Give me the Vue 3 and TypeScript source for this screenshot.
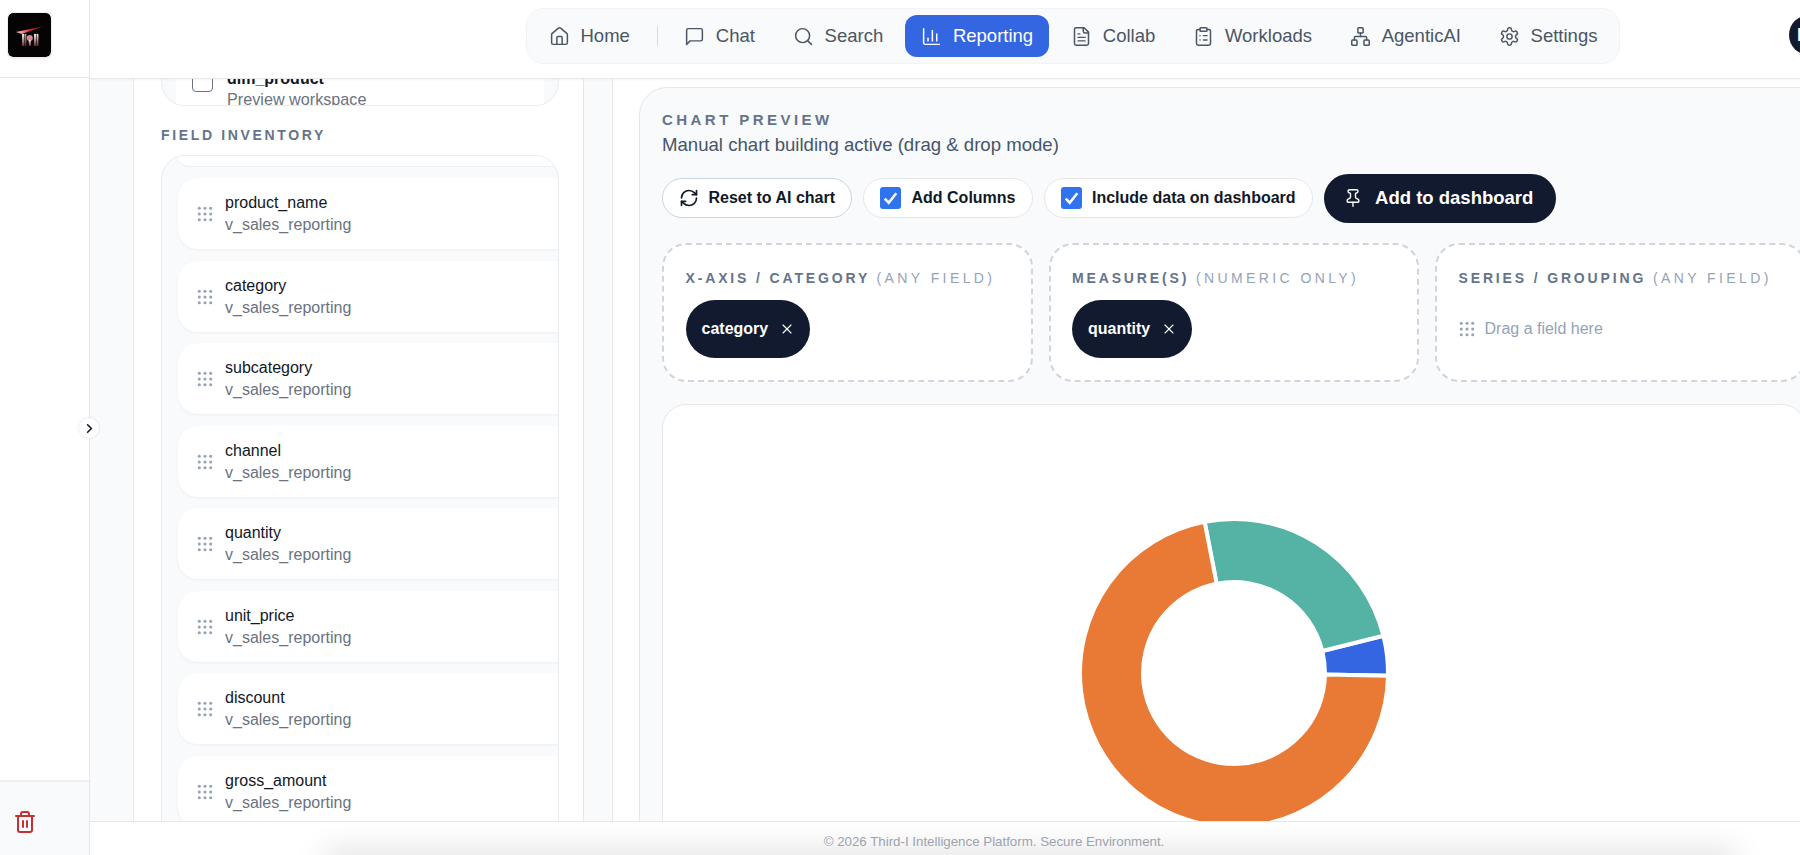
<script setup lang="ts">
const icons: Record<string, string[]> = {
  home: ['M15 21v-8a1 1 0 0 0-1-1h-4a1 1 0 0 0-1 1v8', 'M3 10a2 2 0 0 1 .709-1.528l7-5.999a2 2 0 0 1 2.582 0l7 5.999A2 2 0 0 1 21 10v9a2 2 0 0 1-2 2H5a2 2 0 0 1-2-2z'],
  chat: ['M21 15a2 2 0 0 1-2 2H7l-4 4V5a2 2 0 0 1 2-2h14a2 2 0 0 1 2 2z'],
  search: ['M3 11a8 8 0 1 0 16 0a8 8 0 1 0-16 0', 'm21 21-4.3-4.3'],
  reporting: ['M3 3v16a2 2 0 0 0 2 2h16', 'M18 17V9', 'M13 17V5', 'M8 17v-3'],
  collab: ['M15 2H6a2 2 0 0 0-2 2v16a2 2 0 0 0 2 2h12a2 2 0 0 0 2-2V7Z', 'M14 2v4a2 2 0 0 0 2 2h4', 'M10 9H8', 'M16 13H8', 'M16 17H8'],
  workloads: ['M9 2h6a1 1 0 0 1 1 1v2a1 1 0 0 1-1 1H9a1 1 0 0 1-1-1V3a1 1 0 0 1 1-1z', 'M16 4h2a2 2 0 0 1 2 2v14a2 2 0 0 1-2 2H6a2 2 0 0 1-2-2V6a2 2 0 0 1 2-2h2', 'M12 11h4', 'M12 16h4', 'M8 11h.01', 'M8 16h.01'],
  agentic: ['M17 16h4a1 1 0 0 1 1 1v4a1 1 0 0 1-1 1h-4a1 1 0 0 1-1-1v-4a1 1 0 0 1 1-1z', 'M3 16h4a1 1 0 0 1 1 1v4a1 1 0 0 1-1 1H3a1 1 0 0 1-1-1v-4a1 1 0 0 1 1-1z', 'M10 2h4a1 1 0 0 1 1 1v4a1 1 0 0 1-1 1h-4a1 1 0 0 1-1-1V3a1 1 0 0 1 1-1z', 'M5 16v-3a1 1 0 0 1 1-1h12a1 1 0 0 1 1 1v3', 'M12 12V8'],
  settings: ['M12.22 2h-.44a2 2 0 0 0-2 2v.18a2 2 0 0 1-1 1.73l-.43.25a2 2 0 0 1-2 0l-.15-.08a2 2 0 0 0-2.73.73l-.22.38a2 2 0 0 0 .73 2.73l.15.1a2 2 0 0 1 1 1.72v.51a2 2 0 0 1-1 1.74l-.15.09a2 2 0 0 0-.73 2.73l.22.38a2 2 0 0 0 2.73.73l.15-.08a2 2 0 0 1 2 0l.43.25a2 2 0 0 1 1 1.73V20a2 2 0 0 0 2 2h.44a2 2 0 0 0 2-2v-.18a2 2 0 0 1 1-1.73l.43-.25a2 2 0 0 1 2 0l.15.08a2 2 0 0 0 2.73-.73l.22-.39a2 2 0 0 0-.73-2.73l-.15-.08a2 2 0 0 1-1-1.74v-.5a2 2 0 0 1 1-1.74l.15-.09a2 2 0 0 0 .73-2.73l-.22-.38a2 2 0 0 0-2.73-.73l-.15.08a2 2 0 0 1-2 0l-.43-.25a2 2 0 0 1-1-1.73V4a2 2 0 0 0-2-2z', 'M9 12a3 3 0 1 0 6 0a3 3 0 1 0-6 0'],
  refresh: ['M3 12a9 9 0 0 1 9-9 9.75 9.75 0 0 1 6.74 2.74L21 8', 'M21 3v5h-5', 'M21 12a9 9 0 0 1-9 9 9.75 9.75 0 0 1-6.74-2.74L3 16', 'M8 16H3v5'],
  pin: ['M12 17v5', 'M9 10.76a2 2 0 0 1-1.11 1.79l-1.78.9A2 2 0 0 0 5 15.24V16a1 1 0 0 0 1 1h12a1 1 0 0 0 1-1v-.76a2 2 0 0 0-1.11-1.79l-1.78-.9A2 2 0 0 1 15 10.76V7a1 1 0 0 1 1-1 2 2 0 0 0 0-4H8a2 2 0 0 0 0 4 1 1 0 0 1 1 1z'],
  x: ['M18 6 6 18', 'm6 6 12 12'],
  trash: ['M3 6h18', 'M19 6v14c0 1-1 2-2 2H7c-1 0-2-1-2-2V6', 'M8 6V4c0-1 1-2 2-2h4c1 0 2 1 2 2v2', 'M10 11v6', 'M14 11v6'],
  chevron: ['m9 18 6-6-6-6'],
}

const navItems = [
  { label: 'Home', icon: 'home' },
  { label: 'Chat', icon: 'chat' },
  { label: 'Search', icon: 'search' },
  { label: 'Reporting', icon: 'reporting', active: true },
  { label: 'Collab', icon: 'collab' },
  { label: 'Workloads', icon: 'workloads' },
  { label: 'AgenticAI', icon: 'agentic' },
  { label: 'Settings', icon: 'settings' },
]

const fields = ['product_name', 'category', 'subcategory', 'channel', 'quantity', 'unit_price', 'discount', 'gross_amount']

const gripDots: number[][] = []
for (const x of [2, 7, 12]) for (const y of [2, 7, 12]) gripDots.push([x, y])

function arc(fromDeg: number, toDeg: number): string {
  const R = 154
  const r = 91
  const c = 200
  const p = (rad: number, deg: number) => {
    const a = (deg * Math.PI) / 180
    return `${(c + rad * Math.cos(a)).toFixed(2)} ${(c - rad * Math.sin(a)).toFixed(2)}`
  }
  const large = Math.abs(toDeg - fromDeg) > 180 ? 1 : 0
  return `M${p(R, fromDeg)}A${R} ${R} 0 ${large} 0 ${p(R, toDeg)}L${p(r, toDeg)}A${r} ${r} 0 ${large} 1 ${p(r, fromDeg)}Z`
}

const slices = [
  { d: arc(-1, 14), fill: '#3366e0' },
  { d: arc(14, 101), fill: '#54b3a5' },
  { d: arc(101, 359), fill: '#e97a35' },
]
</script>

<template>
  <div class="app">
    <aside class="sidebar">
      <div class="side-head">
        <svg class="logo" viewBox="0 0 43 44" aria-label="Third-I logo">
          <defs>
            <linearGradient id="streak" x1="0" x2="1" y1="0" y2="0">
              <stop offset="0" stop-color="#f4e3e3" />
              <stop offset="0.5" stop-color="#d8242c" />
              <stop offset="1" stop-color="#5a0a10" />
            </linearGradient>
            <linearGradient id="pillar" x1="0" x2="0" y1="0" y2="1">
              <stop offset="0" stop-color="#f2f2f2" />
              <stop offset="1" stop-color="#6b2a2e" />
            </linearGradient>
          </defs>
          <rect width="43" height="44" rx="5" fill="#050304" />
          <path d="M8 19 L36 13 L14 21 Z" fill="url(#streak)" />
          <rect x="14" y="21" width="2.4" height="12" fill="url(#pillar)" />
          <rect x="17.3" y="21" width="1" height="12" fill="url(#pillar)" />
          <rect x="26" y="21" width="2.4" height="12" fill="url(#pillar)" />
          <rect x="29" y="21" width="1.4" height="12" fill="url(#pillar)" />
          <circle cx="21.8" cy="25" r="3" fill="#d98a96" />
          <rect x="20.8" y="27" width="2" height="6" fill="url(#pillar)" />
        </svg>
      </div>
      <div class="side-spacer"></div>
      <div class="side-foot">
        <svg class="icon trash" viewBox="0 0 24 24"><path v-for="d in icons.trash" :key="d" :d="d" /></svg>
      </div>
      <button class="toggle" type="button" aria-label="Expand sidebar">
        <svg class="icon chev" viewBox="0 0 24 24"><path v-for="d in icons.chevron" :key="d" :d="d" /></svg>
      </button>
    </aside>

    <div class="main">
      <header class="topbar">
        <nav class="nav">
          <template v-for="(item, i) in navItems" :key="item.label">
            <a class="nav-item" :class="{ active: item.active }">
              <svg class="icon nav-icon" viewBox="0 0 24 24"><path v-for="d in icons[item.icon]" :key="d" :d="d" /></svg>
              <span>{{ item.label }}</span>
            </a>
            <span v-if="i === 0" class="nav-sep"></span>
          </template>
        </nav>
        <div class="avatar">D</div>
      </header>

      <div class="content">
        <section class="left">
          <div class="table-card">
            <div class="table-row">
              <span class="table-check"></span>
              <div>
                <div class="table-name">dim_product</div>
                <div class="table-sub">Preview workspace</div>
              </div>
            </div>
          </div>
          <h3 class="inv-title">FIELD INVENTORY</h3>
          <div class="field-card">
            <div class="sliver"></div>
            <div v-for="f in fields" :key="f" class="field">
              <svg class="grip" viewBox="0 0 14 14"><circle v-for="p in gripDots" :key="p.join()" :cx="p[0]" :cy="p[1]" r="1.35" /></svg>
              <div>
                <div class="field-name">{{ f }}</div>
                <div class="field-sub">v_sales_reporting</div>
              </div>
            </div>
          </div>
        </section>

        <section class="right">
          <div class="preview">
            <div class="pv-title">CHART PREVIEW</div>
            <div class="pv-sub">Manual chart building active (drag &amp; drop mode)</div>

            <div class="actions">
              <button class="pill reset" type="button">
                <svg class="icon pill-icon" viewBox="0 0 24 24"><path v-for="d in icons.refresh" :key="d" :d="d" /></svg>
                Reset to AI chart
              </button>
              <label class="pill check">
                <span class="box"><svg viewBox="0 0 20 20"><path d="M4.5 10.5 8.3 14.5 15.5 5.5" /></svg></span>
                Add Columns
              </label>
              <label class="pill check">
                <span class="box"><svg viewBox="0 0 20 20"><path d="M4.5 10.5 8.3 14.5 15.5 5.5" /></svg></span>
                Include data on dashboard
              </label>
              <button class="add" type="button">
                <svg class="icon add-icon" viewBox="0 0 24 24"><path v-for="d in icons.pin" :key="d" :d="d" /></svg>
                Add to dashboard
              </button>
            </div>

            <div class="zones">
              <div class="zone">
                <div class="zone-title">X-AXIS / CATEGORY <span>(ANY FIELD)</span></div>
                <div class="zone-body">
                  <span class="chip">category <svg class="icon chip-x" viewBox="0 0 24 24"><path v-for="d in icons.x" :key="d" :d="d" /></svg></span>
                </div>
              </div>
              <div class="zone">
                <div class="zone-title">MEASURE(S) <span>(NUMERIC ONLY)</span></div>
                <div class="zone-body">
                  <span class="chip">quantity <svg class="icon chip-x" viewBox="0 0 24 24"><path v-for="d in icons.x" :key="d" :d="d" /></svg></span>
                </div>
              </div>
              <div class="zone">
                <div class="zone-title">SERIES / GROUPING <span>(ANY FIELD)</span></div>
                <div class="zone-body">
                  <span class="hint">
                    <svg class="grip" viewBox="0 0 14 14"><circle v-for="p in gripDots" :key="p.join()" :cx="p[0]" :cy="p[1]" r="1.35" /></svg>
                    Drag a field here
                  </span>
                </div>
              </div>
            </div>

            <div class="chart">
              <svg class="donut" viewBox="0 0 400 400">
                <path v-for="s in slices" :key="s.fill" :d="s.d" :fill="s.fill" stroke="#fff" stroke-width="4" />
              </svg>
            </div>
          </div>
        </section>
      </div>

      <footer class="footer">
        <div class="footer-glow"></div>
        <span>© 2026 Third-I Intelligence Platform. Secure Environment.</span>
      </footer>
    </div>
  </div>
</template>

<style scoped>
.app {
  display: flex;
  width: 1800px;
  height: 855px;
  overflow: hidden;
  position: relative;
  background: #f8fafc;
  font-family: "Liberation Sans", Arial, sans-serif;
  color: #111827;
}
.icon {
  fill: none;
  stroke: currentColor;
  stroke-width: 2;
  stroke-linecap: round;
  stroke-linejoin: round;
  flex: none;
}
.sidebar {
  width: 90px;
  flex: none;
  display: flex;
  flex-direction: column;
  background: #fff;
  border-right: 1px solid #e5e7eb;
  box-sizing: border-box;
  position: relative;
  z-index: 3;
}
.side-head {
  height: 78px;
  flex: none;
  box-sizing: border-box;
  border-bottom: 1px solid #e5e7eb;
  padding: 13px 0 0 8px;
}
.logo {
  width: 43px;
  height: 44px;
  display: block;
  border-radius: 5px;
  box-shadow: 0 0 0 1px #eceef1, 0 2px 3px rgba(0, 0, 0, 0.08);
}
.side-spacer {
  flex: 1;
}
.side-foot {
  height: 75px;
  flex: none;
  box-sizing: border-box;
  border-top: 2px solid #eceef1;
  background: #f8fafc;
  padding: 28px 0 0 13px;
}
.trash {
  width: 24px;
  height: 24px;
  color: #c53030;
  display: block;
}
.toggle {
  position: absolute;
  left: 79px;
  top: 418px;
  width: 20px;
  height: 20px;
  padding: 0;
  border: none;
  border-radius: 50%;
  background: #fff;
  box-shadow: 0 0 3px rgba(0, 0, 0, 0.14);
  display: flex;
  align-items: center;
  justify-content: center;
  color: #111827;
  z-index: 4;
}
.chev {
  width: 15px;
  height: 15px;
  stroke-width: 2.6;
}
.main {
  flex: 1;
  min-width: 0;
  display: flex;
  flex-direction: column;
}
.topbar {
  height: 79px;
  flex: none;
  box-sizing: border-box;
  display: flex;
  align-items: flex-start;
  background: #fff;
  border-bottom: 1px solid #e5e7eb;
  box-shadow: 0 1px 2px rgba(0, 0, 0, 0.04);
  position: relative;
  z-index: 2;
  padding: 8px 0 0 436px;
}
.nav {
  display: flex;
  align-items: center;
  height: 56px;
  box-sizing: border-box;
  width: 1094px;
  padding: 0 0 0 6px;
  gap: 6.2px;
  background: #f8fafc;
  border: 1px solid #f1f3f6;
  border-radius: 18px;
}
.nav-item {
  display: flex;
  align-items: center;
  gap: 10.5px;
  height: 42px;
  padding: 0 16px;
  border-radius: 12px;
  font-size: 18.5px;
  color: #4b5563;
  white-space: nowrap;
}
.nav-item.active {
  background: #3366e0;
  color: #fff;
}
.nav-icon {
  width: 21px;
  height: 21px;
  stroke-width: 1.7;
}
.nav-sep {
  flex: none;
  width: 1px;
  height: 20px;
  margin: 0 4.3px 0 4.8px;
  background: #d8dce2;
}
.avatar {
  position: absolute;
  left: 1699px;
  top: 15px;
  width: 40px;
  height: 40px;
  box-sizing: border-box;
  padding-left: 8px;
  border-radius: 50%;
  background: #111a2e;
  color: #fff;
  font-weight: 700;
  font-size: 18px;
  display: flex;
  align-items: center;
}
.content {
  flex: 1;
  min-height: 0;
  display: flex;
  align-items: stretch;
  overflow: hidden;
  padding-left: 43px;
}
.left {
  width: 451px;
  flex: none;
  box-sizing: border-box;
  background: #fff;
  border-left: 1px solid #e5e7eb;
  border-right: 1px solid #e5e7eb;
  padding: 0 24px 0 27px;
  overflow: hidden;
}
.table-card {
  height: 60px;
  margin-top: -33px;
  box-sizing: border-box;
  background: #f8fafc;
  border: 1px solid #e8ebf0;
  border-radius: 0 0 24px 24px;
  padding: 0 14px;
  overflow: hidden;
}
.table-row {
  display: flex;
  gap: 14px;
  height: 100%;
  background: #fff;
  padding: 22px 16px 0;
  box-sizing: border-box;
}
.table-check {
  width: 21px;
  height: 21px;
  box-sizing: border-box;
  border: 1.5px solid #6b7280;
  border-radius: 4px;
  margin-top: 2px;
  flex: none;
}
.table-name {
  font-size: 16px;
  font-weight: 700;
  line-height: 20px;
}
.table-sub {
  font-size: 16.2px;
  line-height: 21px;
  color: #6b7280;
}
.inv-title {
  margin: 20.5px 0 12px;
  font-size: 14px;
  line-height: 16px;
  font-weight: 700;
  letter-spacing: 2.65px;
  color: #64748b;
}
.field-card {
  height: 720px;
  box-sizing: border-box;
  background: #f8fafc;
  border: 1px solid #e8ebf0;
  border-radius: 24px;
  overflow: hidden;
  padding: 0 0 0 16px;
  display: flex;
  flex-direction: column;
  gap: 11.5px;
}
.sliver {
  height: 11px;
  flex: none;
  width: 420px;
  box-sizing: border-box;
  background: #fff;
  border-bottom: 1px solid #eceff3;
  border-radius: 0 0 20px 20px;
}
.field {
  width: 420px;
  height: 71px;
  flex: none;
  box-sizing: border-box;
  display: flex;
  align-items: center;
  gap: 12px;
  background: #fff;
  border-radius: 20px;
  padding: 1.5px 0 0 19px;
  box-shadow: 0 1px 3px rgba(15, 23, 42, 0.05);
}
.grip {
  width: 16px;
  height: 16px;
  flex: none;
  fill: #94a3b8;
}
.field-name {
  font-size: 16px;
  line-height: 22px;
  color: #111827;
}
.field-sub {
  font-size: 16px;
  line-height: 22px;
  color: #6b7280;
}
.right {
  width: 1216px;
  flex: none;
  margin-left: 28px;
  box-sizing: border-box;
  background: #fff;
  border-left: 1px solid #e5e7eb;
  padding: 8px 0 0 26px;
}
.preview {
  width: 1190px;
  box-sizing: border-box;
  height: 800px;
  background: #f8fafc;
  border: 1px solid #e5e7eb;
  border-radius: 28px;
  padding: 23px 22px 22px;
}
.pv-title {
  font-size: 15px;
  line-height: 18px;
  font-weight: 700;
  letter-spacing: 3.45px;
  color: #64748b;
}
.pv-sub {
  font-size: 18.6px;
  line-height: 26px;
  margin-top: 3px;
  color: #475569;
}
.actions {
  display: flex;
  align-items: center;
  gap: 11px;
  margin-top: 15.5px;
}
.pill {
  display: flex;
  align-items: center;
  height: 40px;
  box-sizing: border-box;
  border-radius: 20px;
  background: #fff;
  border: 1px solid #e5e7eb;
  font: inherit;
  font-size: 16px;
  font-weight: 700;
  color: #111827;
  white-space: nowrap;
}
.reset {
  width: 190px;
  padding: 0 0 0 16px;
  gap: 9.5px;
  border-color: #cbd5e1;
}
.pill-icon {
  width: 20px;
  height: 20px;
}
.check {
  padding: 0 16px;
  gap: 10.5px;
}
.box {
  width: 21px;
  height: 22px;
  border-radius: 3px;
  background: #2f74ee;
  display: block;
}
.box svg {
  display: block;
  width: 100%;
  height: 100%;
  fill: none;
  stroke: #fff;
  stroke-width: 2.4;
}
.add {
  display: flex;
  align-items: center;
  gap: 12px;
  width: 232px;
  height: 49px;
  box-sizing: border-box;
  padding: 0 0 0 19.5px;
  border: none;
  border-radius: 25px;
  background: #111a2e;
  color: #fff;
  font: inherit;
  font-size: 18.5px;
  font-weight: 700;
  white-space: nowrap;
}
.add-icon {
  width: 20px;
  height: 20px;
  stroke-width: 1.7;
}
.zones {
  display: grid;
  grid-template-columns: repeat(3, 370.5px);
  gap: 16px;
  margin-top: 20px;
}
.zone {
  height: 139px;
  box-sizing: border-box;
  background: #fff;
  border: 2.5px dashed #d1d5db;
  border-radius: 24px;
  padding: 24px 21.5px 0;
}
.zone-title {
  font-size: 14px;
  line-height: 18px;
  font-weight: 700;
  letter-spacing: 2.85px;
  color: #64748b;
  white-space: nowrap;
}
.zone-title span {
  font-weight: 400;
  letter-spacing: 3.4px;
  color: #94a3b8;
}
.zone-body {
  height: 58px;
  margin-top: 13px;
  display: flex;
  align-items: center;
}
.chip {
  display: inline-flex;
  align-items: center;
  gap: 10.5px;
  height: 58px;
  padding: 0 15.5px 0 16px;
  border-radius: 29px;
  background: #111a2e;
  color: #fff;
  font-size: 16px;
  font-weight: 700;
}
.chip-x {
  width: 16px;
  height: 16px;
  stroke-width: 1.7;
}
.hint {
  display: flex;
  align-items: center;
  gap: 10px;
  font-size: 16px;
  color: #94a3b8;
}
.chart {
  width: 1144px;
  margin-top: 22px;
  height: 600px;
  box-sizing: border-box;
  background: #fff;
  border: 1px solid #e5e7eb;
  border-radius: 24px;
  padding-top: 68px;
  display: flex;
  justify-content: center;
  align-items: flex-start;
}
.donut {
  width: 400px;
  height: 400px;
  flex: none;
}
.footer {
  height: 34px;
  flex: none;
  box-sizing: border-box;
  position: relative;
  z-index: 2;
  overflow: hidden;
  background: #fff;
  border-top: 1px solid #e5e7eb;
  display: flex;
  align-items: center;
  justify-content: center;
  padding: 5px 0 0 98px;
  font-size: 13.3px;
  color: #9ca3af;
}
.footer span {
  position: relative;
}
.footer-glow {
  position: absolute;
  left: 240px;
  right: 70px;
  top: 36px;
  height: 10px;
  box-shadow: 0 -2px 30px 6px rgba(0, 0, 0, 0.13);
}
</style>

<style>
html,
body {
  margin: 0;
  overflow: hidden;
}
</style>
